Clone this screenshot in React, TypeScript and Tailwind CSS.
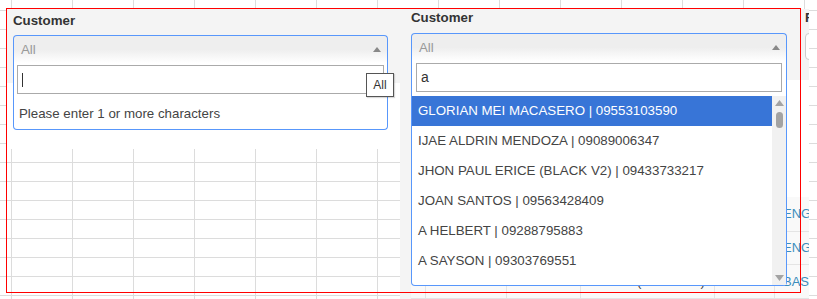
import React from "react";

const results = [
  "GLORIAN MEI MACASERO | 09553103590",
  "IJAE ALDRIN MENDOZA | 09089006347",
  "JHON PAUL ERICE (BLACK V2) | 09433733217",
  "JOAN SANTOS | 09563428409",
  "A HELBERT | 09288795883",
  "A SAYSON | 09303769551",
];

function ArrowUp({ color = "#888" }: { color?: string }) {
  return (
    <svg width="8" height="5" viewBox="0 0 8 5">
      <path d="M0 5L4 0L8 5Z" fill={color} />
    </svg>
  );
}

function Choice() {
  return (
    <div className="flex h-[28px] items-start justify-between rounded-t-[4px] border border-b-0 border-[#5897fb] bg-[linear-gradient(to_top,#fff_0%,#eee_50%)] pl-[7px] pr-[6px] pt-[5px]">
      <span className="text-[13.3px] leading-[18px] text-[#999]">All</span>
      <span className="mt-[6px]">
        <ArrowUp />
      </span>
    </div>
  );
}

function Scrollbar() {
  return (
    <div className="flex w-[14px] flex-col items-center bg-[#f1f1f1] pb-[4px] pt-[4px]">
      <svg width="9" height="6" viewBox="0 0 9 6">
        <path d="M0 6L4.5 0L9 6Z" fill="#a3a3a3" />
      </svg>
      <div className="mt-[6px] h-[16px] w-[7px] rounded-full bg-[#a3a3a3]" />
      <div className="flex-1" />
      <svg width="9" height="6" viewBox="0 0 9 6">
        <path d="M0 0L4.5 6L9 0Z" fill="#a3a3a3" />
      </svg>
    </div>
  );
}

function LeftPane() {
  return (
    <div className="relative h-[140px] w-[393px] shrink-0 bg-[linear-gradient(to_bottom,#f4f4f4_74px,#fff_74px)] pl-[6px] pt-[3px]">
      <div className="text-[13.3px] font-bold leading-[18px] text-[#333]">Customer</div>
      <div className="relative mt-[5px] w-[375px]">
        <Choice />
        <div className="absolute left-0 right-0 top-full rounded-b-[4px] border border-t-0 border-[#5897fb] bg-white px-[3px] pb-[6px] pt-[2px]">
          <div className="flex h-[29px] items-center border border-[#aaa] bg-white pl-[4px]">
            <span className="h-[14px] w-px bg-[#333]" />
          </div>
          <div className="mt-[11px] pl-[2px] text-[13.3px] leading-[18px] text-[#444]">
            Please enter 1 or more characters
          </div>
        </div>
      </div>
      {/* tooltip */}
      <div className="absolute left-[359px] top-[64px] flex h-[24px] w-[28px] items-center justify-center border border-[#555] bg-white text-[12px] text-[#333] shadow-[1px_1px_1px_rgba(0,0,0,0.15)]">
        All
      </div>
    </div>
  );
}

const cols = ["w-[15px]", "w-[81px]", "w-[74px]", "w-[134px] pl-[56px]", "w-[60px]"];

function TableRow({ h, tag, paren }: { h: string; tag: string; paren?: boolean }) {
  return (
    <div className={`flex ${h} border-b border-[#e4e4e4] bg-[#f9f9f9]`}>
      {cols.map((c, i) => (
        <div key={i} className={`${c} flex shrink-0 items-center whitespace-nowrap border-r border-[#e4e4e4] text-[13.3px] text-[#444]`}>
          {paren && i === 3 ? "(09171234)" : ""}
        </div>
      ))}
      <div className="flex flex-1 items-center whitespace-nowrap pl-[8px] text-[13px] text-[#3c8dbc]">{tag}</div>
    </div>
  );
}

function RightPane() {
  return (
    <div className="flex h-[290px] w-[409px] shrink-0 flex-col overflow-hidden bg-[#f4f4f4]">
      <div className="flex h-[71px] shrink-0 pl-[11px]">
        <div className="w-[376px] shrink-0">
          <div className="text-[13.3px] font-bold leading-[18px] text-[#333]">Customer</div>
          <div className="relative z-10 mt-[6px]">
            <Choice />
            <div className="absolute left-0 right-0 top-full rounded-b-[4px] border border-t-0 border-[#5897fb] bg-white pt-[2px]">
              <div className="px-[4px]">
                <div className="flex h-[29px] items-center border border-[#aaa] bg-white pl-[4px] text-[14px] text-[#333]">
                  a
                </div>
              </div>
              <div className="mt-[4px] flex h-[189px]">
                <ul className="flex-1 overflow-hidden">
                  {results.map((r, i) => (
                    <li
                      key={r}
                      className={`h-[30px] whitespace-nowrap pl-[6px] pt-[6px] text-[13.3px] leading-[18px] ${
                        i === 0 ? "bg-[#3875d7] text-white" : "text-[#444]"
                      }`}
                    >
                      {r}
                    </li>
                  ))}
                </ul>
                <Scrollbar />
              </div>
            </div>
          </div>
        </div>
        <div className="ml-[18px] shrink-0">
          <div className="text-[13.3px] font-bold leading-[18px] text-[#333]">From</div>
          <div className="mt-[6px] h-[27px] w-[120px] rounded-[4px] border border-[#ccc] bg-white" />
        </div>
      </div>
      <div className="ml-[11px] flex-1 bg-white pt-[117px]">
        <TableRow h="h-[35px]" tag="ENG" />
        <TableRow h="h-[33px]" tag="ENG" />
        <TableRow h="h-[34px]" tag="BASA" paren />
      </div>
    </div>
  );
}

export default function App() {
  return (
    <div className="relative h-[299px] w-[817px] overflow-hidden bg-white bg-[linear-gradient(to_right,#dcdcdc_1px,transparent_1px),linear-gradient(to_bottom,#dcdcdc_1px,transparent_1px)] bg-[length:61px_19px] bg-[position:11px_10px] font-['Liberation_Sans',Arial,sans-serif]">
      <div className="flex items-start pl-[7px] pt-[9px]">
        <LeftPane />
        <RightPane />
      </div>
      {/* red annotation frame */}
      <div className="pointer-events-none absolute left-[6px] top-[8px] h-[285px] w-[795px] border border-[#ff0000]" />
    </div>
  );
}
